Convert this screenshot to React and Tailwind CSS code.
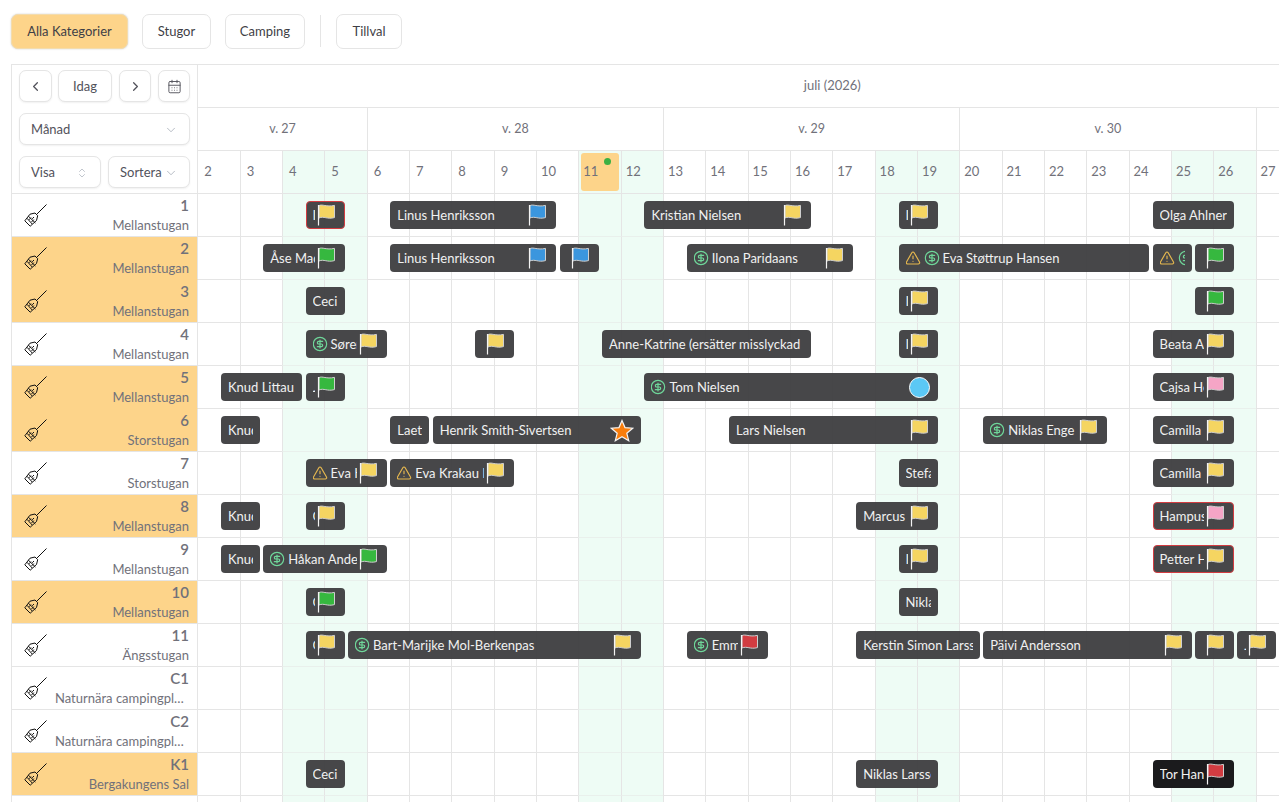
import React from 'react';
import { CalendarDays, ChevronDown, ChevronLeft, ChevronRight, ChevronsUpDown, CircleDollarSign, TriangleAlert } from 'lucide-react';

const flagColors = { yellow: '#f5d561', green: '#36b83f', blue: '#3b96de', pink: '#f5a5c6', red: '#d23c41' };

const days = Array.from({ length: 30 }, (_, i) => i + 2);
const weekend = [4, 5, 11, 12, 18, 19, 25, 26];
const weeks = [
  { label: 'v. 27', span: 'col-span-4' },
  { label: 'v. 28', span: 'col-span-7' },
  { label: 'v. 29', span: 'col-span-7' },
  { label: 'v. 30', span: 'col-span-7' },
  { label: 'v. 31', span: 'col-span-5' },
];

const rows = [
  { id: '1', type: 'Mellanstugan', events: [
    { from: 4.5, to: 5.5, name: 'Ingrid', flag: 'yellow', alert: true },
    { from: 6.5, to: 10.5, name: 'Linus Henriksson', flag: 'blue' },
    { from: 12.5, to: 16.5, name: 'Kristian Nielsen', flag: 'yellow' },
    { from: 18.5, to: 19.5, name: 'Ingrid', flag: 'yellow' },
    { from: 24.5, to: 26.5, name: 'Olga Ahlner' },
  ] },
  { id: '2', type: 'Mellanstugan', active: true, joined: true, events: [
    { from: 3.5, to: 5.5, name: 'Åse Madsen', flag: 'green' },
    { from: 6.5, to: 10.5, name: 'Linus Henriksson', flag: 'blue' },
    { from: 10.5, to: 11.5, name: '', flag: 'blue' },
    { from: 13.5, to: 17.5, name: 'Ilona Paridaans', flag: 'yellow', paid: true },
    { from: 18.5, to: 24.5, name: 'Eva Støttrup Hansen', warn: true, paid: true },
    { from: 24.5, to: 25.5, name: 'Eva', warn: true, paid: true },
    { from: 25.5, to: 26.5, name: '', flag: 'green' },
  ] },
  { id: '3', type: 'Mellanstugan', active: true, events: [
    { from: 4.5, to: 5.5, name: 'Ceci' },
    { from: 18.5, to: 19.5, name: 'Ingrid', flag: 'yellow' },
    { from: 25.5, to: 26.5, name: '', flag: 'green' },
  ] },
  { id: '4', type: 'Mellanstugan', events: [
    { from: 4.5, to: 6.5, name: 'Søren Holm', flag: 'yellow', paid: true },
    { from: 8.5, to: 9.5, name: '', flag: 'yellow' },
    { from: 11.5, to: 16.5, name: 'Anne-Katrine (ersätter misslyckad' },
    { from: 18.5, to: 19.5, name: 'Ingrid', flag: 'yellow' },
    { from: 24.5, to: 26.5, name: 'Beata Andersson', flag: 'yellow' },
  ] },
  { id: '5', type: 'Mellanstugan', active: true, joined: true, events: [
    { from: 2.5, to: 4.5, name: 'Knud Littau' },
    { from: 4.5, to: 5.5, name: 'Jan', flag: 'green' },
    { from: 12.5, to: 19.5, name: 'Tom Nielsen', paid: true, mark: 'circle' },
    { from: 24.5, to: 26.5, name: 'Cajsa Holm', flag: 'pink' },
  ] },
  { id: '6', type: 'Storstugan', active: true, events: [
    { from: 2.5, to: 3.5, name: 'Knud Littau' },
    { from: 6.5, to: 7.5, name: 'Laetitia' },
    { from: 7.5, to: 12.5, name: 'Henrik Smith-Sivertsen', mark: 'star' },
    { from: 14.5, to: 19.5, name: 'Lars Nielsen', flag: 'yellow' },
    { from: 20.5, to: 23.5, name: 'Niklas Enge', flag: 'yellow', paid: true },
    { from: 24.5, to: 26.5, name: 'Camilla', flag: 'yellow' },
  ] },
  { id: '7', type: 'Storstugan', events: [
    { from: 4.5, to: 6.5, name: 'Eva Krakau', flag: 'yellow', warn: true },
    { from: 6.5, to: 9.5, name: 'Eva Krakau Lund', flag: 'yellow', warn: true },
    { from: 18.5, to: 19.5, name: 'Stefan' },
    { from: 24.5, to: 26.5, name: 'Camilla', flag: 'yellow' },
  ] },
  { id: '8', type: 'Mellanstugan', active: true, events: [
    { from: 2.5, to: 3.5, name: 'Knud Littau' },
    { from: 4.5, to: 5.5, name: 'Olof', flag: 'yellow' },
    { from: 17.5, to: 19.5, name: 'Marcus Berg', flag: 'yellow' },
    { from: 24.5, to: 26.5, name: 'Hampus Lind', flag: 'pink', alert: true },
  ] },
  { id: '9', type: 'Mellanstugan', events: [
    { from: 2.5, to: 3.5, name: 'Knud Littau' },
    { from: 3.5, to: 6.5, name: 'Håkan Andersson', flag: 'green', paid: true },
    { from: 18.5, to: 19.5, name: 'Ingrid', flag: 'yellow' },
    { from: 24.5, to: 26.5, name: 'Petter Holm', flag: 'yellow', alert: true },
  ] },
  { id: '10', type: 'Mellanstugan', active: true, events: [
    { from: 4.5, to: 5.5, name: 'Olof', flag: 'green' },
    { from: 18.5, to: 19.5, name: 'Niklas Larsson' },
  ] },
  { id: '11', type: 'Ängsstugan', events: [
    { from: 4.5, to: 5.5, name: 'Olof', flag: 'yellow' },
    { from: 5.5, to: 12.5, name: 'Bart-Marijke Mol-Berkenpas', flag: 'yellow', paid: true },
    { from: 13.5, to: 15.5, name: 'Emma Lund', flag: 'red', paid: true },
    { from: 17.5, to: 20.5, name: 'Kerstin Simon Larsson' },
    { from: 20.5, to: 25.5, name: 'Päivi Andersson', flag: 'yellow' },
    { from: 25.5, to: 26.5, name: '', flag: 'yellow' },
    { from: 26.5, to: 27.5, name: 'Jan', flag: 'yellow' },
  ] },
  { id: 'C1', type: 'Naturnära campingplatser', events: [] },
  { id: 'C2', type: 'Naturnära campingplatser', events: [] },
  { id: 'K1', type: 'Bergakungens Sal', active: true, events: [
    { from: 4.5, to: 5.5, name: 'Ceci' },
    { from: 17.5, to: 19.5, name: 'Niklas Larsson' },
    { from: 24.5, to: 26.5, name: 'Tor Hansen', flag: 'red', dark: true },
  ] },
  { id: 'K2', type: 'Bergakungens Sal', events: [] },
];

const DAY = 42.35;

function Broom() {
  return (
    <svg width="23" height="23" viewBox="0 0 23 23" fill="none" stroke="#111" strokeWidth="1" className="shrink-0">
      <path d="M22.5 0.5 12.5 10.5" />
      <path d="M11 9 13.7 11.7 12.5 16.5 6.2 22.2 0.8 16.8 6 10.2Z" />
      <path d="M4.2 12 11.4 19" />
      <path d="M3 14.3 8.2 20M5 15.8 7 13.6M7.5 18 9.8 15.6M10 13 8.2 14.8" />
    </svg>
  );
}

function Flag({ color }) {
  return (
    <svg width="20" height="22" viewBox="0 0 20 22" className="shrink-0">
      <path d="M3 1.6C6.5 -0.2 10 3.2 18.5 1.4V13.6C11 15.6 8 11.8 3 14Z" fill={flagColors[color]} stroke="#cfcfcf" strokeWidth="1" />
      <path d="M2.5 1V21.5" stroke="#f4f4f4" strokeWidth="1.2" />
    </svg>
  );
}

function Booking({ event }) {
  const left = (event.from - 2) * DAY + 2.4;
  const width = (event.to - event.from) * DAY - 3.3;
  return (
    <div
      className={`absolute top-[7px] flex h-[28px] items-center rounded-[4px] border px-[6px] text-[13px] text-[#f1f1f1] ${
        event.dark ? 'bg-[#1b1b1d]' : 'bg-[#3d3d3f]/95'
      } ${event.alert ? 'border-[#d23c41]' : 'border-transparent'}`}
      style={{ left, width }}
    >
      <div className="flex min-w-0 flex-1 items-center gap-[3px] overflow-hidden whitespace-nowrap">
        {event.warn && <TriangleAlert size={16} strokeWidth={1.75} className="-ml-[1px] shrink-0 text-[#e6b84f]" />}
        {event.paid && <CircleDollarSign size={16} strokeWidth={1.75} className={`shrink-0 text-[#6fd79a] ${event.warn ? '' : '-ml-[1px]'}`} />}
        <span className="pt-[1px]">{event.name}</span>
      </div>
      {event.flag && (
        <div className="flex w-[23px] shrink-0 justify-start pl-[1px]">
          <Flag color={event.flag} />
        </div>
      )}
      {event.mark === 'circle' && <div className="mr-[1px] h-[21px] w-[21px] shrink-0 rounded-full border border-white bg-[#5bc8f5]" />}
      {event.mark === 'star' && (
        <svg width="24" height="23" viewBox="0 0 24 23" className="shrink-0">
          <path d="M12 1.5 15 8.6 22.7 9.2 16.8 14.2 18.7 21.7 12 17.7 5.3 21.7 7.2 14.2 1.3 9.2 9 8.6Z" fill="#f97d0b" stroke="#f4f4f4" strokeWidth="1.2" />
        </svg>
      )}
    </div>
  );
}

function Control({ className = '', children }) {
  return (
    <div className={`flex h-[32px] items-center rounded-[7px] border border-[#e5e5e5] bg-white pt-[1px] text-[13px] text-[#52525b] shadow-[0_1px_2px_rgba(0,0,0,0.06)] ${className}`}>
      {children}
    </div>
  );
}

function TopButton({ active, className = '', children }) {
  return (
    <div className={`flex h-[35px] items-center justify-center rounded-[7px] border text-[13px] text-[#3f3f46] ${
      active ? 'border-[#f3dcae] bg-[#fdd48a] shadow-[0_0_2px_rgba(0,0,0,0.2)]' : 'border-[#e5e5e5] bg-white'
    } ${className}`}>
      {children}
    </div>
  );
}

function Row({ row }) {
  return (
    <div className="flex h-[43px]">
      <div className={`relative z-10 flex w-[186px] shrink-0 items-start border-r border-b border-r-[#e5e5e5] pr-[8px] pl-[12px] ${
        row.active ? 'bg-[#fdd48a]' : 'bg-white'
      } ${row.joined ? 'border-b-transparent' : 'border-b-[#e5e5e5]'}`}>
        <div className="mt-[10px]">
          <Broom />
        </div>
        <div className="flex min-w-0 flex-1 flex-col items-end pt-[1px] pl-[8px] text-[#71717a]">
          <div className="h-[20px] text-[15px] leading-[20px] font-semibold">{row.id}</div>
          <div className="mt-[2px] w-full truncate text-right text-[13px] leading-[16px]">{row.type}</div>
        </div>
      </div>
      <div className="relative -ml-[0.67px] grid w-[1270px] shrink-0 grid-cols-[repeat(30,42.33px)]">
        {days.map((d) => (
          <div
            key={d}
            className={`border-b border-l border-l-[#e5e5e5] first:border-l-transparent ${weekend.includes(d) ? 'border-b-[#e9f0ec] bg-[#eefcf5]' : 'border-b-[#e5e5e5]'}`}
          />
        ))}
        {row.events.map((event, i) => (
          <Booking key={i} event={event} />
        ))}
      </div>
    </div>
  );
}

export default function App() {
  return (
    <div className="h-[802px] w-[1279px] overflow-hidden bg-white font-['Lato',sans-serif]">
      <div className="flex h-[64px] items-start gap-[14px] pt-[14px] pl-[11px]">
        <TopButton active className="w-[117px]">Alla Kategorier</TopButton>
        <TopButton className="w-[69px]">Stugor</TopButton>
        <TopButton className="w-[80px]">Camping</TopButton>
        <div className="mt-[1px] mr-[1px] ml-[1px] h-[32px] w-px bg-[#e5e5e5]" />
        <TopButton className="w-[66px]">Tillval</TopButton>
      </div>

      <div className="ml-[11px] w-max border-t border-l border-[#e5e5e5]">
        <div className="flex">
          <div className="relative z-10 flex h-[129px] w-[186px] shrink-0 flex-col gap-[11px] border-r border-b border-[#e5e5e5] bg-white px-[7px] pt-[5px]">
            <div className="flex gap-[6px]">
              <Control className="w-[33px] justify-center"><ChevronLeft size={15} /></Control>
              <Control className="w-[54px] justify-center">Idag</Control>
              <Control className="ml-[1px] w-[32px] justify-center"><ChevronRight size={15} /></Control>
              <Control className="ml-[1px] w-[32px] justify-center"><CalendarDays size={15} strokeWidth={1.5} /></Control>
            </div>
            <Control className="justify-between pr-[11px] pl-[11px]">
              Månad
              <ChevronDown size={14} strokeWidth={1.25} className="text-[#9ca3af]" />
            </Control>
            <div className="flex gap-[7px]">
              <Control className="w-[82px] justify-between pr-[12px] pl-[11px]">
                Visa
                <ChevronsUpDown size={12} strokeWidth={1.25} className="text-[#9ca3af]" />
              </Control>
              <Control className="w-[82px] justify-between pr-[11px] pl-[11px]">
                Sortera
                <ChevronDown size={14} strokeWidth={1.25} className="text-[#9ca3af]" />
              </Control>
            </div>
          </div>
          <div className="-ml-[0.67px] w-[1270px] shrink-0">
            <div className="flex h-[43px] items-center justify-center border-b border-[#e5e5e5] text-[13px] text-[#71717a]">
              juli (2026)
            </div>
            <div className="grid h-[43px] grid-cols-[repeat(30,42.33px)] text-[12.5px] text-[#71717a]">
              {weeks.map((w) => (
                <div key={w.label} className={`flex items-center justify-center border-b border-l border-[#e5e5e5] pt-[1px] first:border-l-transparent ${w.span}`}>
                  {w.label}
                </div>
              ))}
            </div>
            <div className="grid h-[43px] grid-cols-[repeat(30,42.33px)] text-[13px] text-[#71717a]">
              {days.map((d) => (
                <div
                  key={d}
                  className={`border-b border-l border-[#e5e5e5] p-[2px] first:border-l-transparent ${weekend.includes(d) ? 'bg-[#eefcf5]' : ''}`}
                >
                  <div className={`relative flex h-full items-center rounded-[3px] ${d < 10 ? 'pl-[4px]' : 'pl-[2px]'} ${d === 11 ? 'bg-[#fdd48a]' : ''}`}>
                    {d}
                    {d === 11 && <span className="absolute top-[5px] right-[8px] h-[7px] w-[7px] rounded-full bg-[#3cb043]" />}
                  </div>
                </div>
              ))}
            </div>
          </div>
        </div>
        {rows.map((row) => (
          <Row key={row.id} row={row} />
        ))}
      </div>
    </div>
  );
}
